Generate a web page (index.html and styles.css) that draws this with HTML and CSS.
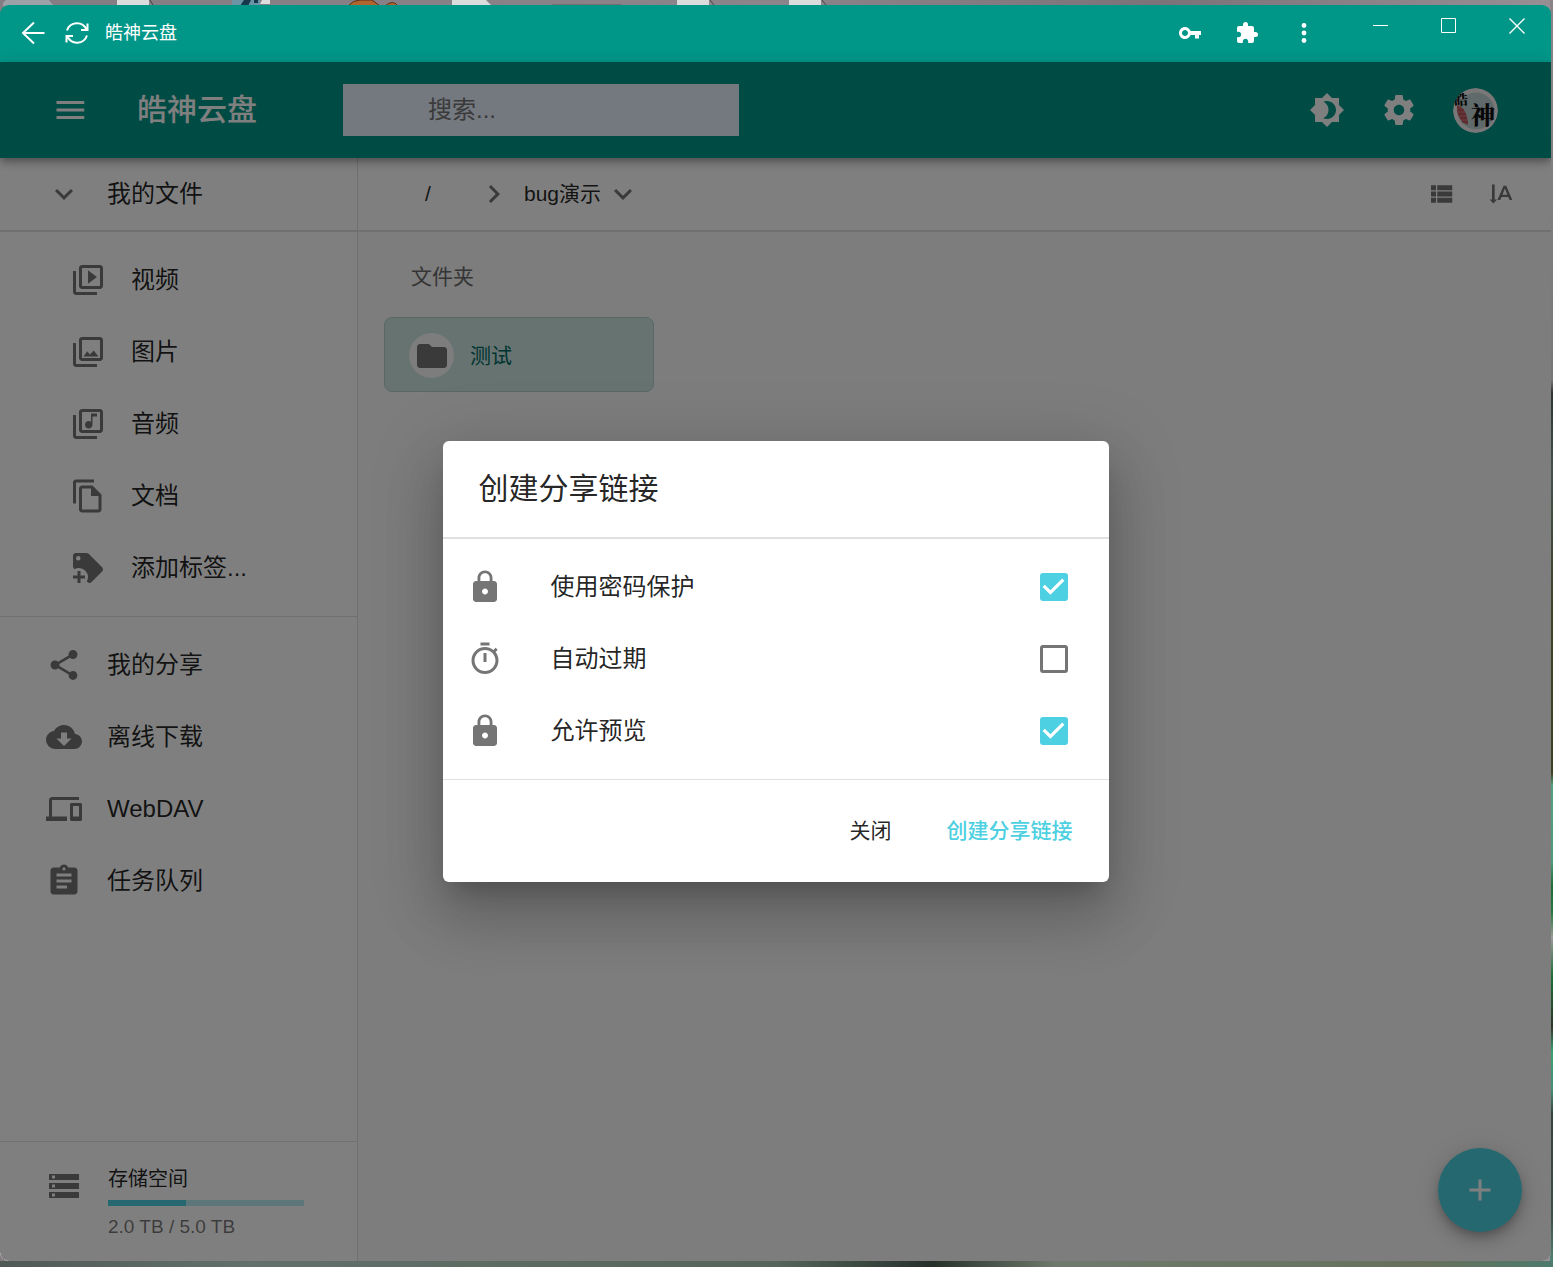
FILE: index.html
```html
<!DOCTYPE html>
<html lang="zh-CN">
<head>
<meta charset="utf-8">
<title>皓神云盘</title>
<link rel="stylesheet" href="styles.css">
</head>
<body>
<svg class="wallpaper" width="840" height="6" viewBox="0 0 840 6" aria-hidden="true">
  <path fill="#9ba1a6" d="M3 6V3l3-3h43l5 6z"/>
  <path fill="#dcdcdc" d="M117 0h32v6h-32zM452 0h34l6 6h-40zM677 0h32v6h-32zM789 0h32v6h-32z"/>
  <path fill="none" stroke="#444" d="M150 0l3 5M710 0l4 5M822 0l4 5"/>
  <path fill="#6b95a5" d="M232 0h28v6h-28z"/><path fill="#16384e" d="M244 0h7l-3 6h-8zM254 0h4v3h-4z"/><path fill="#ddd" d="M262 0h8v4h-10z"/>
  <path fill="#b0642e" stroke="#5b2c12" d="M348 6q5-6 12-6h12l8 6zM385 6q8-7 13 0z"/>
  <path fill="#77706f" d="M552 4h70v2h-70z"/>
</svg>
<div class="window">
  <header class="titlebar">
    <button class="tool" aria-label="返回"><svg width="24" height="24" viewBox="0 0 24 24"><path class="line" d="M23.500 12H2M13 1.500L2 12l11 10.500"/></svg></button>
    <button class="tool reload" aria-label="刷新"><svg width="24" height="24" viewBox="0 0 24 24"><path class="line" d="M2 9.500A10.500 10.500 0 0 1 21.500 8.500M22.500 2.500v6.500h-6.500M22 14.500A10.500 10.500 0 0 1 2.500 15.500M1.500 21.500V15H8"/></svg></button>
    <span class="window-title">皓神云盘</span>
    <div class="browser-tools">
      <button class="tool" aria-label="密码"><svg width="24" height="24" viewBox="0 0 24 24"><path d="M12.650 10C11.830 7.670 9.610 6 7 6c-3.310 0-6 2.690-6 6s2.690 6 6 6c2.610 0 4.830-1.670 5.650-4H17v3.500h4V14h2v-4H12.650zM7 15c-1.650 0-3-1.350-3-3s1.350-3 3-3 3 1.350 3 3-1.350 3-3 3z"/></svg></button>
      <button class="tool" aria-label="扩展程序"><svg width="24" height="24" viewBox="0 0 24 24"><path d="M20.500 11H19V7c0-1.100-.9-2-2-2h-4V3.500a2.500 2.500 0 0 0-5 0V5H4c-1.100 0-1.990.9-1.990 2v3.800H3.500c1.490 0 2.700 1.210 2.700 2.700s-1.210 2.700-2.700 2.700H2V20c0 1.100.9 2 2 2h3.800v-1.500c0-1.490 1.210-2.700 2.700-2.700s2.700 1.210 2.700 2.700V22H17c1.100 0 2-.9 2-2v-4h1.500a2.500 2.500 0 0 0 0-5z"/></svg></button>
      <button class="tool" aria-label="更多"><svg width="24" height="24" viewBox="0 0 24 24"><circle cx="12" cy="4.500" r="2.400"/><circle cx="12" cy="12" r="2.400"/><circle cx="12" cy="19.500" r="2.400"/></svg></button>
    </div>
    <div class="window-controls">
      <button aria-label="最小化"><svg width="16" height="16" viewBox="0 0 16 16"><path class="thin" d="M0 7.500h15"/></svg></button>
      <button aria-label="最大化"><svg width="16" height="16" viewBox="0 0 16 16"><path class="thin" d="M.5 .5h14v14H.5z"/></svg></button>
      <button aria-label="关闭窗口"><svg width="16" height="16" viewBox="0 0 16 16"><path class="cross" d="M.5 .5l15 15M15.500 .5l-15 15"/></svg></button>
    </div>
  </header>

  <div class="app">
    <header class="appbar">
      <button class="icon-button" aria-label="菜单"><svg class="icon" viewBox="0 0 24 24"><path d="M3 18h18.500v-2H3v2zm0-5h18.500v-2H3v2zm0-7v2h18.500V6H3z"/></svg></button>
      <h1>皓神云盘</h1>
      <input class="search" type="text" placeholder="搜索..." aria-label="搜索">
      <div class="appbar-actions">
        <button class="icon-button" aria-label="切换深色模式"><svg class="icon" viewBox="0 0 24 24"><path d="M20 8.690V4h-4.690L12 .69 8.690 4H4v4.690L.69 12 4 15.310V20h4.690L12 23.310 15.310 20H20v-4.690L23.310 12 20 8.690zM12 18c-.89 0-1.740-.2-2.500-.55C11.560 16.500 13 14.420 13 12s-1.440-4.500-3.500-5.450C10.260 6.200 11.110 6 12 6c3.310 0 6 2.690 6 6s-2.690 6-6 6z"/></svg></button>
        <button class="icon-button" aria-label="设置"><svg class="icon" viewBox="0 0 24 24"><path d="M19.430 12.980c.04-.32.07-.64.07-.98s-.03-.66-.07-.98l2.110-1.650c.19-.15.24-.42.12-.64l-2-3.460c-.12-.22-.39-.3-.61-.22l-2.490 1c-.52-.4-1.080-.73-1.690-.98l-.38-2.650C14.460 2.180 14.250 2 14 2h-4c-.25 0-.46.18-.49.42l-.38 2.650c-.61.25-1.170.59-1.690.98l-2.490-1c-.23-.09-.49 0-.61.22l-2 3.460c-.13.22-.07.49.12.64l2.110 1.650c-.04.32-.07.65-.07.98s.03.66.07.98l-2.110 1.650c-.19.15-.24.42-.12.64l2 3.460c.12.22.39.3.61.22l2.490-1c.52.4 1.080.73 1.690.98l.38 2.650c.03.24.24.42.49.42h4c.25 0 .46-.18.49-.42l.38-2.650c.61-.25 1.170-.59 1.690-.98l2.490 1c.23.09.49 0 .61-.22l2-3.460c.12-.22.07-.49-.12-.64l-2.110-1.650zM12 15.500c-1.930 0-3.500-1.570-3.500-3.500s1.570-3.500 3.500-3.500 3.500 1.570 3.500 3.500-1.570 3.500-3.500 3.500z"/></svg></button>
        <button class="avatar" aria-label="账户">
          <svg width="45" height="45" viewBox="0 0 45 45">
            <circle cx="22.500" cy="22.500" r="22.500" fill="#f2eeee"/>
            <circle cx="23" cy="23" r="18.500" fill="#c2d4d6"/>
            <path fill="#c9696d" d="M4 17c6 1 11 9 11 20C8 35 3 27 4 17z"/>
            <path stroke="#a8474c" fill="none" d="M5 22h6M5 26h8M7 30h7M9 34h6"/>
            <text x="1" y="17" font-size="14" transform="rotate(-4 7 12)">皓</text>
            <text x="18" y="36" font-size="24">神</text>
          </svg>
        </button>
      </div>
    </header>

    <div class="body">
      <nav class="sidebar">
        <a class="nav-item nav-head" href="#files"><svg class="icon" viewBox="0 0 24 24"><path d="M16.590 8.590L12 13.170 7.410 8.590 6 10l6 6 6-6z"/></svg>我的文件</a>
        <div class="nav-group nested">
          <a class="nav-item" href="#video"><svg class="icon" viewBox="0 0 24 24"><path d="M4 6H2v14c0 1.100.9 2 2 2h14v-2H4V6zM20 2H8c-1.100 0-2 .9-2 2v12c0 1.100.9 2 2 2h12c1.100 0 2-.9 2-2V4c0-1.100-.9-2-2-2zm0 14H8V4h12v12zM12 5.500v9l6-4.500z"/></svg>视频</a>
          <a class="nav-item" href="#image"><svg class="icon" viewBox="0 0 24 24"><path d="M4 6H2v14c0 1.100.9 2 2 2h14v-2H4V6zM20 2H8c-1.100 0-2 .9-2 2v12c0 1.100.9 2 2 2h12c1.100 0 2-.9 2-2V4c0-1.100-.9-2-2-2zm0 14H8V4h12v12zM9 15l2.500-3.500 1.800 2.200L15.800 11 19 15z"/></svg>图片</a>
          <a class="nav-item" href="#audio"><svg class="icon" viewBox="0 0 24 24"><path d="M4 6H2v14c0 1.100.9 2 2 2h14v-2H4V6zM20 2H8c-1.100 0-2 .9-2 2v12c0 1.100.9 2 2 2h12c1.100 0 2-.9 2-2V4c0-1.100-.9-2-2-2zm0 14H8V4h12v12zM18 7h-3v5.500c0 1.380-1.120 2.500-2.500 2.500S10 13.880 10 12.500s1.120-2.500 2.500-2.500c.57 0 1.080.19 1.500.51V5h4v2z"/></svg>音频</a>
          <a class="nav-item" href="#docs"><svg class="icon" viewBox="0 0 24 24"><path d="M16 1H4c-1.100 0-2 .9-2 2v14h2V3h12V1zM15 5H8c-1.100 0-2 .9-2 2v14c0 1.100.9 2 2 2h11c1.100 0 2-.9 2-2V11l-6-6zM8 21V7h6v5h5v9H8z"/></svg>文档</a>
          <a class="nav-item" href="#tag"><svg class="icon" viewBox="0 0 24 24"><path d="M21.410 11.580L12.410 2.580C12.040 2.210 11.530 2 11 2H4A2 2 0 0 0 2 4V11C2 11.530 2.210 12.040 2.590 12.410L3 12.810C3.900 12.270 4.940 12 6 12A6 6 0 0 1 12 18C12 19.060 11.720 20.090 11.180 21L11.580 21.400C11.950 21.780 12.470 22 13 22C13.530 22 14.040 21.790 14.410 21.410L21.410 14.410C21.790 14.040 22 13.530 22 13C22 12.470 21.790 11.960 21.410 11.580M5.500 7A1.500 1.500 0 0 1 4 5.500A1.500 1.500 0 0 1 5.500 4A1.500 1.500 0 0 1 7 5.500A1.500 1.500 0 0 1 5.500 7M10 19H7V22H5V19H2V17H5V14H7V17H10V19Z"/></svg>添加标签...</a>
        </div>
        <div class="nav-group">
          <a class="nav-item" href="#shares"><svg class="icon" viewBox="0 0 24 24"><path d="M18 16.080c-.76 0-1.440.3-1.960.77L8.910 12.700c.05-.23.09-.46.09-.7s-.04-.47-.09-.7l7.050-4.110c.54.5 1.250.81 2.040.81 1.660 0 3-1.340 3-3s-1.340-3-3-3-3 1.340-3 3c0 .24.04.47.09.7L8.040 9.810C7.500 9.310 6.790 9 6 9c-1.660 0-3 1.340-3 3s1.340 3 3 3c.79 0 1.500-.31 2.040-.81l7.120 4.160c-.05.21-.08.43-.08.65 0 1.610 1.310 2.920 2.920 2.920s2.920-1.310 2.920-2.920-1.310-2.920-2.920-2.920z"/></svg>我的分享</a>
          <a class="nav-item" href="#offline"><svg class="icon" viewBox="0 0 24 24"><path fill-rule="evenodd" d="M17 13L12 18 7 13H10V9H14V13zM19.350 10.030C18.670 6.590 15.640 4 12 4 9.110 4 6.600 5.640 5.350 8.030 2.340 8.360 0 10.900 0 14A6 6 0 0 0 6 20H19A5 5 0 0 0 24 15C24 12.360 21.950 10.220 19.350 10.030z"/></svg>离线下载</a>
          <a class="nav-item" href="#webdav"><svg class="icon" viewBox="0 0 24 24"><path d="M4 6h18V4H4c-1.100 0-2 .9-2 2v11H0v3h14v-3H4V6zm19 2h-6c-.55 0-1 .45-1 1v10c0 .55.45 1 1 1h6c.55 0 1-.45 1-1V9c0-.55-.45-1-1-1zm-1 9h-4v-7h4v7z"/></svg>WebDAV</a>
          <a class="nav-item" href="#tasks"><svg class="icon" viewBox="0 0 24 24"><path d="M19 3h-4.180C14.400 1.840 13.300 1 12 1c-1.300 0-2.400.84-2.820 2H5c-1.100 0-2 .9-2 2v14c0 1.100.9 2 2 2h14c1.100 0 2-.9 2-2V5c0-1.100-.9-2-2-2zm-7 0c.55 0 1 .45 1 1s-.45 1-1 1-1-.45-1-1 .45-1 1-1zm2 14H7v-2h7v2zm3-4H7v-2h10v2zm0-4H7V7h10v2z"/></svg>任务队列</a>
        </div>
        <section class="storage">
          <svg class="icon" viewBox="0 0 24 24"><path d="M2 20h20v-4H2v4zm2-3h2v2H4v-2zM2 4v4h20V4H2zm4 3H4V5h2v2zm-4 7h20v-4H2v4zm2-3h2v2H4v-2z"/></svg>
          <div class="storage-info">
            <span class="storage-title">存储空间</span>
            <div class="meter"><div class="meter-fill" style="width: 40%"></div></div>
            <span class="storage-usage">2.0 TB / 5.0 TB</span>
          </div>
        </section>
      </nav>

      <main class="content">
        <div class="toolbar">
          <button class="crumb root">/</button>
          <svg class="icon" viewBox="0 0 24 24"><path d="M10 6L8.590 7.410 13.170 12l-4.580 4.590L10 18l6-6z"/></svg>
          <button class="crumb">bug演示<svg class="icon" viewBox="0 0 24 24"><path d="M16.590 8.590L12 13.170 7.410 8.590 6 10l6 6 6-6z"/></svg></button>
          <div class="view-tools">
            <button class="icon-button" aria-label="列表视图"><svg class="icon small" viewBox="0 0 24 24"><path d="M4 14h4v-4H4v4zm0 5h4v-4H4v4zM4 9h4V5H4v4zm5 5h12v-4H9v4zm0 5h12v-4H9v4zM9 5v4h12V5H9z"/></svg></button>
            <button class="icon-button" aria-label="排序"><svg class="icon small" viewBox="0 -1 27 27"><path d="M5.400 4h2.400v13.500H10l-3.400 3.600L3.200 17.500h2.200zM15.800 5h2.400L23.700 18h-2.500l-1.200-2.900h-6L12.800 18h-2.500zM17 7.600l-2.200 5.500h4.400z"/></svg></button>
          </div>
        </div>
        <h2>文件夹</h2>
        <button class="folder">
          <span class="folder-icon"><svg class="icon" viewBox="0 0 24 24"><path d="M10 4H4c-1.100 0-1.990.9-1.990 2L2 18c0 1.100.9 2 2 2h16c1.100 0 2-.9 2-2V8c0-1.100-.9-2-2-2h-8l-2-2z"/></svg></span>
          测试
        </button>
      </main>
    </div>

    <button class="fab" aria-label="新建"><svg class="icon" viewBox="0 0 24 24"><path d="M19 13h-6v6h-2v-6H5v-2h6V5h2v6h6v2z"/></svg></button>

    <div class="backdrop">
      <div class="dialog" role="dialog" aria-labelledby="dialog-title">
        <h2 id="dialog-title">创建分享链接</h2>
        <div class="options">
          <label class="option"><svg class="icon" viewBox="0 0 24 24"><path d="M18 8h-1V6c0-2.760-2.240-5-5-5S7 3.240 7 6v2H6c-1.100 0-2 .9-2 2v10c0 1.100.9 2 2 2h12c1.100 0 2-.9 2-2V10c0-1.100-.9-2-2-2zm-6 9c-1.100 0-2-.9-2-2s.9-2 2-2 2 .9 2 2-.9 2-2 2zm3.100-9H8.900V6c0-1.710 1.390-3.100 3.100-3.100 1.710 0 3.100 1.390 3.100 3.100v2z"/></svg><span>使用密码保护</span><input type="checkbox" checked></label>
          <label class="option"><svg class="icon" viewBox="0 0 24 24"><path d="M15 1H9v2h6V1zm-4 13h2V8h-2v6zm8.030-6.610l1.420-1.420c-.43-.51-.9-.99-1.410-1.410l-1.420 1.420C16.070 4.740 14.120 4 12 4c-4.970 0-9 4.030-9 9s4.020 9 9 9 9-4.030 9-9c0-2.120-.74-4.070-1.970-5.610zM12 20c-3.870 0-7-3.130-7-7s3.130-7 7-7 7 3.130 7 7-3.130 7-7 7z"/></svg><span>自动过期</span><input type="checkbox"></label>
          <label class="option"><svg class="icon" viewBox="0 0 24 24"><path d="M18 8h-1V6c0-2.760-2.240-5-5-5S7 3.240 7 6v2H6c-1.100 0-2 .9-2 2v10c0 1.100.9 2 2 2h12c1.100 0 2-.9 2-2V10c0-1.100-.9-2-2-2zm-6 9c-1.100 0-2-.9-2-2s.9-2 2-2 2 .9 2 2-.9 2-2 2zm3.100-9H8.900V6c0-1.710 1.390-3.100 3.100-3.100 1.710 0 3.100 1.390 3.100 3.100v2z"/></svg><span>允许预览</span><input type="checkbox" checked></label>
        </div>
        <div class="dialog-actions">
          <button>关闭</button>
          <button class="primary">创建分享链接</button>
        </div>
      </div>
    </div>
  </div>
</div>
</body>
</html>
```
FILE: styles.css
```css
* { box-sizing: border-box; }

body {
  margin: 0;
  min-height: 100vh;
  display: flex;
  padding: 5px 2px 6px 0;
  font-family: "Liberation Sans", "Noto Sans CJK SC", sans-serif;
  font-size: 24px;
  line-height: 36px;
  color: rgba(0, 0, 0, 0.87);
  background:
    linear-gradient(90deg, #505a55 0, #63706a 16%, #56655c 50%, #25302a 60%, #6e7a6c 68%, #66705c 92%, #4d7a6c 100%) bottom / 100% 6px no-repeat,
    linear-gradient(#8a8488 0, #777779 30%, #2e3436 31%, #44504c 37%, #3d4428 48%, #3c421e 61%, #50a080 62%, #4d9a7a 68%, #1f6b35 70%, #287a3c 72%, #9a9a98 74%, #1f7038 77%, #2b3527 81%, #3ca070 83%, #468c78 86%, #33423c 88%, #3d4d48 96%, #4f8a7a 100%) right / 3px 100% no-repeat,
    linear-gradient(90deg, #837c82, #8b848a 50%, #7b7379 75%, #978f94);
}

button, input { font: inherit; color: inherit; }
button { border: 0; padding: 0; background: none; cursor: pointer; }
a { color: inherit; text-decoration: none; }
svg { display: block; fill: currentColor; flex: none; }
h1, h2 { margin: 0; font-weight: 400; }

.wallpaper { position: absolute; top: 0; left: 0; }

.window {
  position: relative;
  flex: 1;
  display: flex;
  flex-direction: column;
  border-radius: 9px;
  overflow: hidden;
}

.titlebar {
  height: 57px;
  display: flex;
  align-items: center;
  padding: 0 0 2px 21px;
  background: #009688;
  color: #fff;
}
.reload { margin: 0 16px 0 20px; }
.window-title { font-size: 18px; }
.line { fill: none; stroke: currentColor; stroke-width: 2; }
.thin { fill: none; stroke: currentColor; stroke-width: 1; }
.cross { fill: none; stroke: currentColor; stroke-width: 1.4; }
.browser-tools { display: flex; gap: 33px; margin: 0 31px 0 auto; }
.window-controls { display: flex; align-self: flex-start; }
.window-controls button { width: 68px; height: 42px; display: grid; place-items: center; }

.app {
  position: relative;
  flex: 1;
  display: flex;
  flex-direction: column;
  background: #fafafa;
}

.icon { width: 36px; height: 36px; }
.icon.small { width: 30px; height: 30px; }
.icon-button { padding: 18px; }

.appbar {
  position: relative;
  z-index: 1;
  height: 96px;
  display: flex;
  align-items: center;
  padding: 0 53px 0 34px;
  background: #009688;
  color: #fff;
  box-shadow: 0 3px 6px -1px rgba(0, 0, 0, 0.2), 0 6px 8px rgba(0, 0, 0, 0.14), 0 2px 15px rgba(0, 0, 0, 0.12);
}
.appbar h1 { width: 206px; margin-left: 31px; font-size: 30px; font-weight: 500; }
.search {
  width: 396px;
  height: 52px;
  padding: 0 12px 0 85px;
  border: 0;
  background: #e8f0fe;
  color: #333;
}
.search::placeholder { color: #757575; opacity: 1; }
.appbar-actions { display: flex; align-items: center; margin-left: auto; }
.avatar { margin-left: 18px; width: 45px; height: 45px; border-radius: 50%; overflow: hidden; }
.avatar text { fill: #111; font-family: "Noto Serif CJK SC", "Noto Sans CJK SC", serif; font-weight: 900; }

.body { flex: 1; display: flex; }

.sidebar {
  width: 358px;
  display: flex;
  flex-direction: column;
  border-right: 1px solid #e0e0e0;
  background: #fff;
}
.nav-item {
  height: 72px;
  display: flex;
  align-items: center;
  gap: 25px;
  padding-left: 46px;
}
.nav-head { height: 74px; border-bottom: 2px solid #e0e0e0; }
.nav-group { padding: 12px 0; }
.nested { border-bottom: 1px solid #e0e0e0; }
.nested .nav-item { padding-left: 70px; }
.sidebar .icon, .toolbar .icon, .folder .icon, .option .icon { color: #757575; }

.storage {
  display: flex;
  gap: 26px;
  margin-top: auto;
  padding: 22px 53px 19px 46px;
  border-top: 1px solid #e0e0e0;
}
.storage > .icon { margin-top: 4px; }
.storage-info { flex: 1; display: flex; flex-direction: column; }
.storage-title { font-size: 20px; line-height: 30px; }
.storage-usage { font-size: 19px; line-height: 30px; color: rgba(0, 0, 0, 0.54); }
.meter { height: 6px; margin: 6px 0; background: #b8ecf3; }
.meter-fill { height: 100%; background: #4dd0e1; }

.content { flex: 1; }
.toolbar {
  height: 74px;
  display: flex;
  align-items: center;
  padding: 0 20px 0 22px;
  border-bottom: 2px solid #e0e0e0;
  background: #fff;
}
.crumb { display: flex; align-items: center; justify-content: center; gap: 4px; padding-left: 12px; font-size: 21px; }
.crumb.root { width: 96px; padding: 0; }
.view-tools { display: flex; margin-left: auto; }
.view-tools .icon-button { padding: 15px; }
.content h2 { margin: 30px 0 25px 53px; font-size: 21px; line-height: 30px; color: #6b6b6b; }
.folder {
  width: 270px;
  height: 75px;
  margin-left: 26px;
  padding: 2px 0 0 24px;
  display: flex;
  align-items: center;
  gap: 16px;
  border: 1px solid #b4ceca;
  border-radius: 8px;
  background: #cce6e3;
  color: #00695f;
  font-size: 21px;
}
.folder-icon { width: 45px; height: 45px; display: grid; place-items: center; border-radius: 50%; background: #fafafa; }

.fab {
  position: absolute;
  right: 29px;
  bottom: 29px;
  width: 84px;
  height: 84px;
  display: grid;
  place-items: center;
  border-radius: 50%;
  background: #4dd0e1;
  color: #fff;
  box-shadow: 0 5px 8px -2px rgba(0, 0, 0, 0.2), 0 9px 15px rgba(0, 0, 0, 0.14), 0 2px 27px rgba(0, 0, 0, 0.12);
}

.backdrop {
  position: absolute;
  inset: 0;
  z-index: 2;
  display: grid;
  place-items: center;
  background: rgba(0, 0, 0, 0.5);
}
.dialog {
  width: 100%;
  max-width: 666px;
  border-radius: 6px;
  background: #fff;
  box-shadow: 0 17px 23px -11px rgba(0, 0, 0, 0.2), 0 36px 57px 5px rgba(0, 0, 0, 0.14), 0 14px 69px 12px rgba(0, 0, 0, 0.12);
}
.dialog h2 { padding: 24px 36px; font-size: 30px; line-height: 48px; }
.options { padding: 12px 0; border-top: 2px solid #e0e0e0; border-bottom: 1px solid #e0e0e0; }
.option { height: 72px; display: flex; align-items: center; padding: 0 41px 0 24px; }
.option span { flex: 1; margin-left: 48px; }
.option input {
  appearance: none;
  width: 28px;
  height: 28px;
  margin: 0;
  border: 3px solid #757575;
  border-radius: 3px;
}
.option input:checked { border: 0; background: #4dd0e1; }
.option input:checked::before {
  content: "";
  display: block;
  height: 100%;
  background: #fff;
  clip-path: polygon(39% 78%, 11% 50%, 19% 42%, 39% 62%, 81% 20%, 89% 28%);
}
.dialog-actions { display: flex; justify-content: flex-end; gap: 16px; padding: 24px; }
.dialog-actions button { min-width: 96px; height: 54px; padding: 0 12px; font-size: 21px; }
.dialog-actions .primary { color: #4dd0e1; font-weight: 500; }
```
